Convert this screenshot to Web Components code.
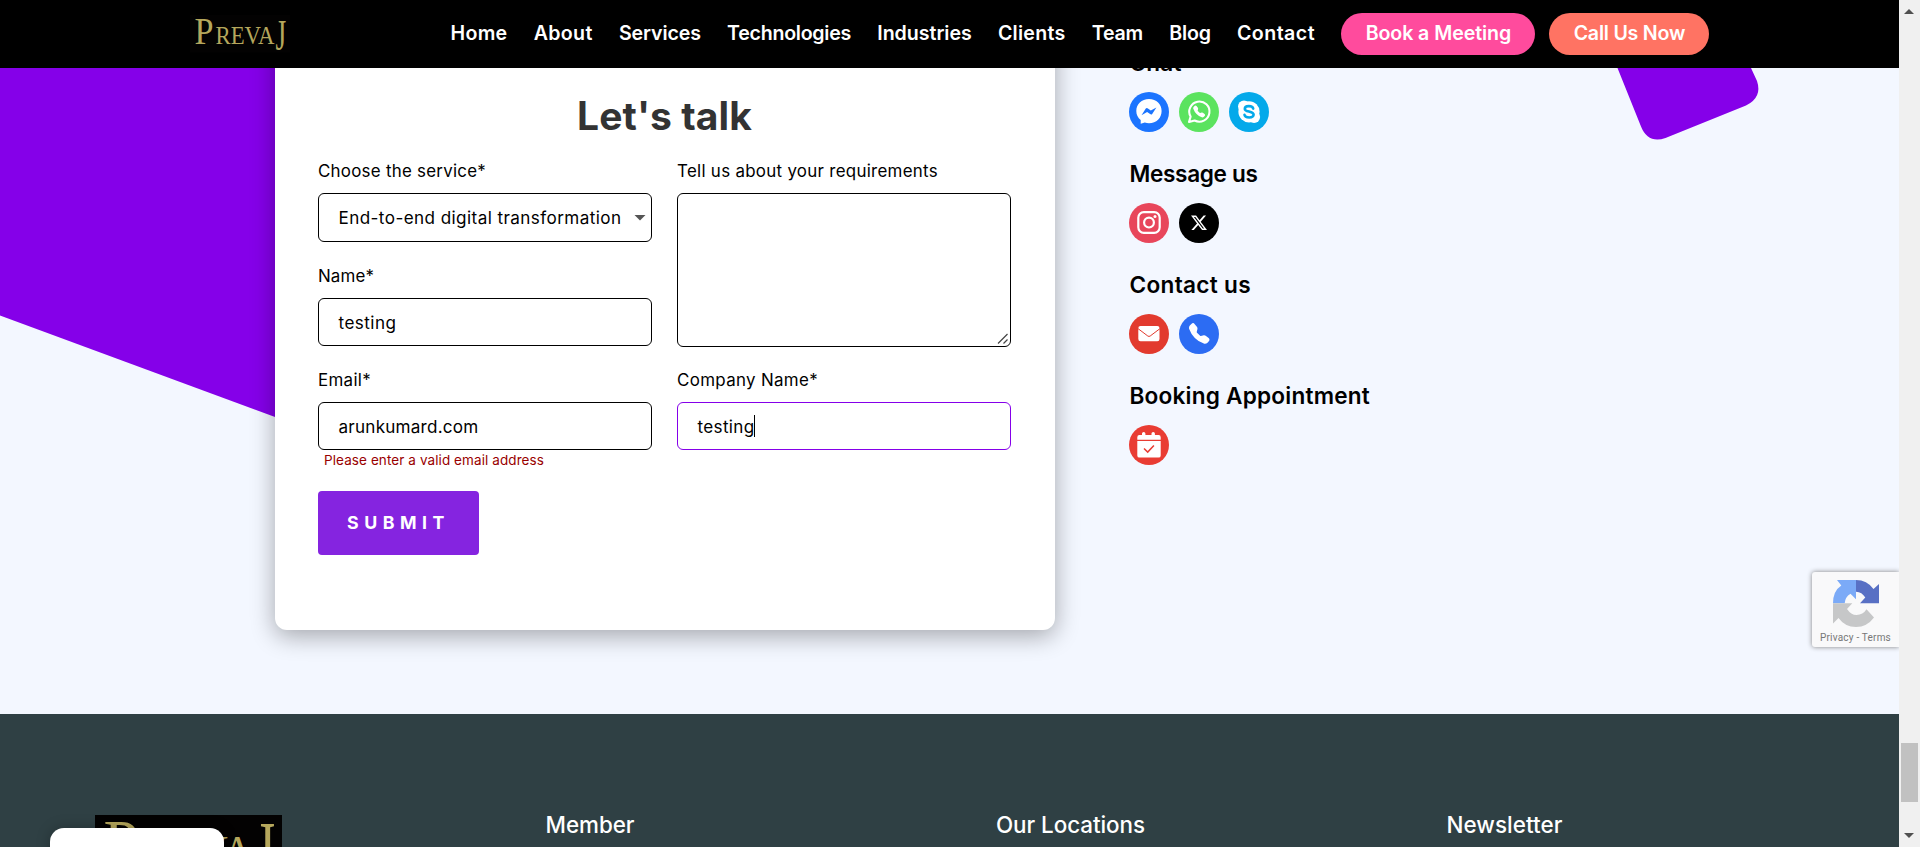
<!DOCTYPE html>
<html lang="en">
<head>
<meta charset="utf-8">
<title>PrevaJ - Contact</title>
<style>
html,body{margin:0;height:100%;overflow:hidden}
body{font-family:Inter,"Liberation Sans",sans-serif;color:#000}
</style>
</head>
<body>
<app-page></app-page>
<script>
const define=(name,html,setup)=>customElements.define(name,class extends HTMLElement{
  connectedCallback(){
    if(this.shadowRoot)return;
    this.attachShadow({mode:'open'}).innerHTML=typeof html==='function'?html(this):html;
    if(setup)setup(this);
  }
});

define('app-page',`
<style>
:host{display:grid;grid-template-columns:minmax(0,1fr) 21px;height:847px;overflow:hidden;position:relative}
.view{display:flex;flex-direction:column;height:847px;overflow:hidden;position:relative}
.chat{position:absolute;left:50px;top:828px;width:174px;height:40px;border-radius:14px;background:#fff;box-shadow:0 0 14px rgba(0,0,0,.25)}
recaptcha-badge{position:absolute;right:0;top:572px}
</style>
<div class="view">
  <site-header></site-header>
  <contact-section></contact-section>
  <site-footer></site-footer>
  <div class="chat"></div>
  <recaptcha-badge></recaptcha-badge>
</div>
<scroll-bar></scroll-bar>`);

define('site-header',`
<style>
:host{display:flex;flex:none;height:68px;background:#000;box-sizing:border-box;padding-left:190px;align-items:center}
brand-logo{width:100px;margin-right:160.500px}
nav{display:flex;gap:26.200px;color:#fff;font-size:19.600px;font-weight:560;line-height:42px;margin-top:-3px}
.btns{display:flex;gap:14px;margin-left:26.400px;color:#fff}
</style>
<brand-logo></brand-logo>
<nav>
<fit-text w="57">Home</fit-text><fit-text w="59">About</fit-text><fit-text w="82">Services</fit-text><fit-text w="124">Technologies</fit-text><fit-text w="94.500">Industries</fit-text><fit-text w="67.500">Clients</fit-text><fit-text w="51.500">Team</fit-text><fit-text w="41.500">Blog</fit-text><fit-text w="78">Contact</fit-text>
</nav>
<div class="btns">
<pill-button style="--c:#ff4b9d;width:194px"><fit-text w="145.500">Book a Meeting</fit-text></pill-button>
<pill-button style="--c:#ff7363;width:160px"><fit-text w="111.500">Call Us Now</fit-text></pill-button>
</div>`);

define('pill-button',`
<style>:host{display:flex;align-items:center;justify-content:center;height:42px;border-radius:21px;background:var(--c);font-size:19.600px;font-weight:560;box-sizing:border-box;padding-bottom:3px}</style><slot></slot>`);

define('brand-logo',`
<style>:host{display:block}svg{display:block;width:100%;height:auto;font-family:"Liberation Serif",serif}</style>
<svg viewBox="0 0 100 37.500" fill="#b5a75c"><rect width="100" height="37.500" fill="#030202"/>
<text x="4.500" y="28.500" font-size="37" textLength="19" lengthAdjust="spacingAndGlyphs">P</text>
<text x="25.500" y="28.500" font-size="25" textLength="59" lengthAdjust="spacingAndGlyphs">REVA</text>
<text transform="translate(85.500,34.500) scale(.86,1.400)" x="0" y="0" font-size="32">J</text></svg>`);

define('contact-section',`
<style>
:host{display:grid;grid-template-columns:780px 1fr;column-gap:74px;flex:none;height:646px;background:#f3f7ff;padding-left:275px;box-sizing:border-box;overflow:hidden;position:relative}
.deco{position:absolute;inset:0;width:1899px;height:646px}
.card{position:relative;height:602px;margin-top:-40px;background:#fff;border-radius:0 0 12px 12px;box-shadow:0 6px 24px rgba(0,0,0,.33);box-sizing:border-box;padding:64px 44px 0 43px}
h2{margin:0 0 20px;font-size:39px;line-height:48px;font-weight:650;color:#333;text-align:center;height:48px}
.cols{display:grid;grid-template-columns:334px 334px;column-gap:25px}
.col{display:flex;flex-direction:column;gap:23px}
.err{font-size:13.500px;line-height:18px;color:#990000;margin:-22px 0 0 6px;height:18px}
button{all:unset;display:flex;align-items:center;box-sizing:border-box;padding:0 0 2px 29px;width:161px;height:64px;margin-top:22px;border-radius:4px;background:#8524e0;color:#fff;font-size:17.800px;font-weight:700}
aside{position:relative;display:flex;flex-direction:column;margin-top:-18px}
.ico{display:flex;gap:10px;margin:17px 0 29px}
h4{margin:0;height:25px;line-height:26px;font-size:22.600px;font-weight:600;padding-left:.500px}
</style>
<svg class="deco" viewBox="0 68 1899 646" fill="#8500e9"><path d="M0 68H400V463L0 315.500z"/><path d="M1617.500 68L1641 126.500Q1648 144 1665.500 138L1746 105.500Q1762.500 97.500 1757 81L1751 68z"/></svg>
<div class="card">
  <h2><fit-text w="175">Let's talk</fit-text></h2>
  <div class="cols">
    <div class="col">
      <form-field label="Choose the service*" lw="168" w="283" kind="select">End-to-end digital transformation</form-field>
      <form-field label="Name*" lw="56" w="58">testing</form-field>
      <form-field label="Email*" lw="53" w="140">arunkumard.com</form-field>
      <div class="err"><fit-text w="220">Please enter a valid email address</fit-text></div>
    </div>
    <div class="col">
      <form-field label="Tell us about your requirements" lw="261" kind="area"></form-field>
      <form-field label="Company Name*" lw="141" w="57" kind="focus">testing</form-field>
    </div>
  </div>
  <button><fit-text w="103">SUBMIT</fit-text></button>
</div>
<aside>
  <h4><fit-text w="52">Chat</fit-text></h4>
  <div class="ico"><round-icon name="messenger"></round-icon><round-icon name="whatsapp"></round-icon><round-icon name="skype"></round-icon></div>
  <h4><fit-text w="128">Message us</fit-text></h4>
  <div class="ico"><round-icon name="instagram"></round-icon><round-icon name="x"></round-icon></div>
  <h4><fit-text w="121.500">Contact us</fit-text></h4>
  <div class="ico"><round-icon name="mail"></round-icon><round-icon name="phone"></round-icon></div>
  <h4><fit-text w="240.500">Booking Appointment</fit-text></h4>
  <div class="ico"><round-icon name="calendar"></round-icon></div>
</aside>`);

define('form-field',el=>{
  const k=el.getAttribute('kind')||'';
  return `
<style>
:host{display:block}
.l{height:22px;line-height:22px;font-size:16.900px;margin-bottom:11px}
.f{display:flex;align-items:center;box-sizing:border-box;height:48px;border:1px solid #000;border-radius:6px;background:#fff;padding-left:19.500px;font-size:17.100px;position:relative}
.select{height:49px}.select fit-text{margin-top:-1px}.area{height:153.500px;margin-bottom:-.500px}.focus{border-color:#8500e9}
.caret{width:1px;height:22px;background:#000;margin:-1px 0 0 -1px}
.arrow{margin-left:auto;margin-right:5px;width:12px;height:6px;background:#555;clip-path:polygon(0 0,100% 0,50% 100%)}
.grip{margin:auto 1px 1px auto;width:12px;height:12px}
</style>
<div class="l"><fit-text w="${el.getAttribute('lw')}">${el.getAttribute('label')}</fit-text></div>
<div class="f ${k}">${k==='area'?'<svg class="grip" viewBox="0 0 12 12" stroke="#444" stroke-width="1.200"><path d="M1 10.500L10.500 1M6.500 10.500L10.500 6.500"/></svg>':`<fit-text w="${el.getAttribute('w')}">${el.textContent}</fit-text>`}${k==='select'?'<i class="arrow"></i>':''}${k==='focus'?'<i class="caret"></i>':''}</div>`;
});

const HANDSET='M1.885.511a1.745 1.745 0 0 1 2.61.163L6.29 2.98c.329.423.445.974.315 1.494l-.547 2.19a.68.68 0 0 0 .178.643l2.457 2.457a.68.68 0 0 0 .644.178l2.189-.547a1.75 1.75 0 0 1 1.494.315l2.306 1.794c.829.645.905 1.87.163 2.611l-1.034 1.034c-.74.74-1.846 1.065-2.877.702a18.6 18.6 0 0 1-7.01-4.42 18.6 18.6 0 0 1-4.42-7.009c-.362-1.03-.037-2.137.703-2.877z';
const ICONS={
messenger:['#1b74ff','<path d="M20 7C12.500 7 7.300 12.300 7.300 19C7.300 22.700 8.900 25.800 11.700 28V31.800L15.800 30.600Q17.800 31.200 20 31.200C27.500 31.200 32.600 25.900 32.600 19S27.500 7 20 7z"/><path fill="#1b74ff" d="M12.500 23.200L16.800 16.600Q17.700 15.500 18.900 16.400L21.800 18.500L27.400 15.400L23.200 21.900Q22.300 23 21.100 22.100L18.100 20z"/>'],
whatsapp:['#5be35f','<path fill="none" stroke="#fff" stroke-width="2.100" stroke-linejoin="round" d="M10 30L11.600 24.600A10.100 10.100 0 1 1 15.600 28.500z"/><path transform="translate(14.200,13.600) scale(.74)" d="'+HANDSET+'"/>'],
skype:['#04a9ea','<circle cx="20" cy="19.800" r="10.600"/><circle cx="15" cy="14.600" r="6"/><circle cx="25.100" cy="25.100" r="6"/><path fill="none" stroke="#04a9ea" stroke-width="2.600" stroke-linecap="round" d="M24.200 16.600C23.600 13.400 15.800 13.200 15.800 16.900C15.800 20.300 24.600 18.700 24.600 22.600C24.600 26.500 16 26.200 15.500 22.900"/>'],
instagram:['#e8465b','<g fill="none" stroke="#fff" stroke-width="2.200"><rect x="9.300" y="9.200" width="21.400" height="20.600" rx="5.500"/><circle cx="20" cy="19.600" r="4.900"/></g><circle cx="26" cy="13.600" r="1.500"/>'],
x:['#000','<path transform="translate(11.100,10.900) scale(.74)" d="M18.244 2.250h3.308l-7.227 8.260 8.502 11.240H16.170l-5.214-6.817L4.990 21.750H1.680l7.730-8.835L1.254 2.250H8.080l4.713 6.231zm-1.161 17.520h1.833L7.084 4.126H5.117z"/>'],
mail:['#e23a2e','<rect x="9.300" y="12" width="21.200" height="15.200" rx="2.200"/><path fill="none" stroke="#e23a2e" stroke-width="1" d="M9 14.600L18.800 22Q20 22.900 21.200 22L31 14.600"/>'],
phone:['#2c6cf3','<path transform="translate(10,9.300) scale(1.280)" d="'+HANDSET+'"/>'],
calendar:['#e93c33','<path d="M8.300 14.700V12.200Q8.300 10.100 10.400 10.100H13V8.600Q13 7 14.700 7T16.400 8.600V10.100H22.500V8.600Q22.500 7 24.200 7T25.900 8.600V10.100H29.600Q31.700 10.100 31.700 12.200V14.700zM8.300 16H31.700V30.400Q31.700 32.600 29.600 32.600H10.400Q8.300 32.600 8.300 30.400z"/><path fill="none" stroke="#e93c33" stroke-width="1.500" d="M15 23.500L18.700 27.100L24.900 20.400"/>']};
define('round-icon',el=>{
  const [c,g]=ICONS[el.getAttribute('name')];
  return `<style>:host{display:block;width:40px;height:40px;border-radius:50%;background:${c}}svg{display:block}</style><svg width="40" height="40" viewBox="0 0 40 40" fill="#fff">${g}</svg>`;
});

define('site-footer',`
<style>
:host{display:grid;grid-template-columns:450.500px 450.500px 450.500px 1fr;flex:1;background:#2f4044;padding:101px 0 0 95px;color:#fff;overflow:hidden}
brand-logo{width:187px}
h4{margin:0;font-size:22.400px;line-height:26px;font-weight:500;margin-top:-3px}
</style>
<brand-logo></brand-logo>
<h4><fit-text w="89">Member</fit-text></h4>
<h4><fit-text w="149">Our Locations</fit-text></h4>
<h4><fit-text w="116">Newsletter</fit-text></h4>`);

define('recaptcha-badge',`
<style>
:host{display:flex;flex-direction:column;align-items:center;box-sizing:border-box;width:87px;height:75px;padding-top:8px;background:#f9f9fa;border-radius:3px 0 0 3px;box-shadow:0 0 5px #808080;color:#777;font:10px/14px Roboto,sans-serif}
svg{display:block;margin-bottom:4px}
</style>
<svg width="46" height="47" viewBox="0 0 46 47"><path fill="#7baaf7" d="M4 0H23V19.300L17.500 13.700Q12 17 11.700 23.300H0Q0 11 8.300 5.500z"/><path fill="#5870c4" d="M23 0Q34 0 40.500 9L46 4V23.300H27L32.300 17.500Q29 12 23 11.700z"/><path fill="#c6c7c8" d="M0 23.300H19.300L14 29Q18 35 23.500 35Q30 35 33.500 29.300L41 37.500Q34 47 23 47Q12 47 5.500 38L0 43.500z"/></svg>
<fit-text w="71">Privacy - Terms</fit-text>`);

define('scroll-bar',`
<style>
:host{display:grid;grid-template-rows:743px 59px 1fr;background:#f0f0f0;padding:0 2px}
.t{background:#c1c1c1}
i{width:10px;height:5px;background:#505050;justify-self:center;margin-right:1px}
.u{clip-path:polygon(50% 0,100% 100%,0 100%);margin-top:9px}
.d{clip-path:polygon(0 0,100% 0,50% 100%);margin-top:31px}
</style>
<i class="u"></i><div class="t"></div><i class="d"></i>`);

/* Inline label that tracks its letters to a set measure. */
define('fit-text','<style>:host{display:inline-block;white-space:pre}span{display:inline-block}</style><span><slot></slot></span>',el=>{
  const w=+el.getAttribute('w'),s=el.shadowRoot.querySelector('span');
  s.style.letterSpacing=(w-s.getBoundingClientRect().width)/el.textContent.length+'px';
  el.style.width=w+'px';
});
</script>
</body>
</html>
